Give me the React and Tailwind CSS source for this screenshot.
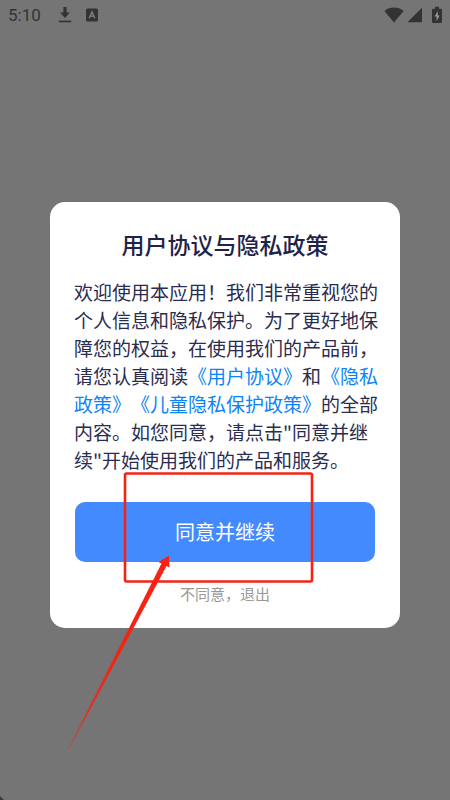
function StatusBar() {
  return (
    <header className="flex h-[30px] items-center justify-between px-2 text-[#333333]">
      <div className="flex items-center">
        <span className="w-[35px] font-['Roboto',sans-serif] text-[17px] leading-5">5:10</span>
        <svg className="ml-[15px] h-4 w-3.5" viewBox="0 0 14 16" fill="currentColor" aria-label="下载">
          <path d="M5.4 0h3.200v5.500h3.300L7 11 2.100 5.500h3.300z" />
          <path d="M0.800 13.600h12.400v1.700H0.800z" />
        </svg>
        <svg className="ml-3.5 h-3.5 w-3" viewBox="0 0 12 14" aria-label="输入法">
          <rect width="12" height="13" rx="1.5" y="0.5" fill="#333333" />
          <path d="M3.2 10.2 6 3.8l2.8 6.4M4.2 8.2h3.6" fill="none" stroke="#858585" strokeWidth="1.3" />
        </svg>
      </div>
      <div className="flex items-center">
        <svg className="h-4 w-5" viewBox="0 0 20 16" fill="currentColor" aria-label="无线网络">
          <path d="M10 15.5 0.4 4C3 1.6 6.3 0.5 10 0.5S17 1.6 19.6 4z" />
        </svg>
        <svg className="ml-[3px] h-4 w-[15px]" viewBox="0 0 15 16" fill="currentColor" aria-label="信号">
          <path d="M15 0.8V15.2H0.5z" />
        </svg>
        <svg className="ml-[10px] h-[18px] w-2.5" viewBox="0 0 10 18" aria-label="电池">
          <path d="M3 0.8h4v1.9h2q1 0 1 1v12.3q0 1-1 1H1q-1 0-1-1V3.7q0-1 1-1h2z" fill="#333333" />
          <path d="M5.8 5 2.6 10.4h2V15l3-5.6H5.8z" fill="#9a9a9a" />
        </svg>
      </div>
    </header>
  );
}

// Red frame and arrow pointing at the agree button
function Pointer() {
  return (
    <svg
      className="pointer-events-none absolute left-2.5 top-[263px] h-[290px] w-[260px]"
      viewBox="0 0 260 290"
      aria-hidden="true"
    >
      <defs>
        <linearGradient id="tail" gradientUnits="userSpaceOnUse" x1="8" y1="284" x2="56" y2="190">
          <stop offset="0" stopColor="#f42314" stopOpacity="0.3" />
          <stop offset="0.4" stopColor="#f42314" stopOpacity="0.8" />
          <stop offset="1" stopColor="#f42314" />
        </linearGradient>
      </defs>
      <rect x="65" y="8.5" width="187" height="108" rx="1.5" fill="none" stroke="#f42314" strokeWidth="2.6" />
      <path d="M8 284 101.5 98.5 98.5 97 109 90.5 109.5 102.5 106.5 101 9 284.5z" fill="url(#tail)" />
    </svg>
  );
}

export default function App() {
  return (
    <div className="relative flex min-h-screen flex-col bg-[#757575] font-['Noto_Sans_CJK_SC',sans-serif]">
      <StatusBar />
      <main className="flex flex-1 items-center px-[50px]">
        <section
          role="dialog"
          aria-labelledby="title"
          className="relative flex w-full flex-col rounded-[15px] bg-white px-6 pb-[22px] pt-[26px]"
        >
          <h1 id="title" className="text-center text-[23px] font-medium leading-8 text-[#1f2349]">
            用户协议与隐私政策
          </h1>
          <p className="-mr-1 mt-[18px] text-[19px] leading-7 text-[#2b2d50] [text-spacing-trim:space-all]">
            欢迎使用本应用！我们非常重视您的个人信息和隐私保护。为了更好地保障您的权益，在使用我们的产品前，请您认真阅读
            <a href="#user" className="text-[#0d84f5]">《用户协议》</a>和
            <a href="#privacy" className="text-[#0d84f5]">《隐私政策》</a>
            <a href="#children" className="text-[#0d84f5]">《儿童隐私保护政策》</a>
            的全部内容。如您同意，请点击"同意并继续"开始使用我们的产品和服务。
          </p>
          <button type="button" className="mx-px mt-7 h-[60px] rounded-[10px] bg-[#448aff] text-xl text-white">
            同意并继续
          </button>
          <button type="button" className="mt-5 self-center text-[15px] leading-6 text-[#999999]">
            不同意，退出
          </button>
          <Pointer />
        </section>
      </main>
      <svg className="absolute bottom-0 left-0 h-1 w-1" viewBox="0 0 4 4" aria-hidden="true">
        <path d="M0 0 4 4H0z" fill="#3a3a42" />
      </svg>
    </div>
  );
}
